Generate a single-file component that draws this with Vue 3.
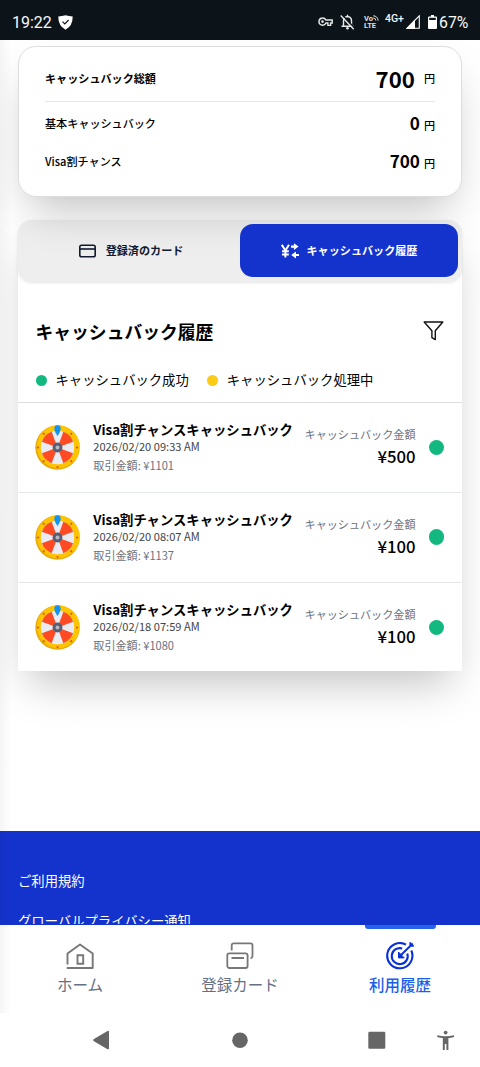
<script setup>
const rows = [
  { date: '2026/02/20 09:33 AM', spent: '¥1101', amount: '¥500' },
  { date: '2026/02/20 08:07 AM', spent: '¥1137', amount: '¥100' },
  { date: '2026/02/18 07:59 AM', spent: '¥1080', amount: '¥100' },
]
const wedges = [45, 135, 225, 315]
const studs = [45, 90, 135, 180, 225, 270, 315]
</script>

<template>
  <div class="screen">
    <header class="status">
      <span class="clock">19:22</span>
      <svg class="shield" width="15" height="15" viewBox="0 0 15 15"><path d="M7.5.2Q11 .8 14.7 1.6Q14.8 11 7.5 14.8Q.2 11 .3 1.6Q4 .8 7.5.2Z" fill="#fff" /><path d="M4.5 6.7l2.3 2.2 3.8-3.9" fill="none" stroke="#0c141a" stroke-width="1.1" /></svg>
      <svg class="key" width="15" height="10" viewBox="0 0 15 10"><path d="M4.5 1a3.6 3.6 0 1 0 3.4 5h2v2.4h2.7V6h1.6V3H7.9A3.6 3.6 0 0 0 4.5 1Z" fill="none" stroke="#e8eaeb" stroke-width="1.4" /><circle cx="4.5" cy="4.6" r="1.3" fill="#e8eaeb" /></svg>
      <svg class="bell" width="15" height="16" viewBox="0 0 15 16"><path d="M3.5 12V6.5Q3.7 3 7.5 2.5Q11.3 3 11.5 6.5V12M1.5 12.3h12M7.5 2.6V.8" fill="none" stroke="#e8eaeb" stroke-width="1.4" /><circle cx="7.5" cy="14.3" r="1.3" fill="#e8eaeb" /><path d="M2 .8l13 13.8" stroke="#0c141a" stroke-width="1.4" /><path d="M.7 1.4l13 13.8" stroke="#e8eaeb" stroke-width="1.4" /></svg>
      <span class="volte"><span class="vo">Vo<svg width="6" height="6" viewBox="0 0 6 6"><path d="M.3.8a4.8 4.8 0 0 1 4.8 4.8M.3 3a2.5 2.5 0 0 1 2.5 2.5" fill="none" stroke="#e8eaeb" /></svg></span><span>LTE</span></span>
      <span class="gen">4G+</span>
      <svg class="signal" width="14" height="14" viewBox="0 0 14 14"><path d="M13.3.8V13.3H.9Z" fill="none" stroke="#fff" stroke-width="1.1" /><path d="M9 4.6V14H0Z" fill="#fff" /></svg>
      <svg class="battery" width="9" height="14" viewBox="0 0 9 14"><path d="M3 0h3v1.5h2q1 0 1 1V13q0 1-1 1H1q-1 0-1-1V2.5q0-1 1-1h2Z" fill="#fff" /><path d="M1.2 2.8h6.600V5H1.2Z" fill="#0c141a" /></svg>
      <span class="percent">67%</span>
    </header>

    <main class="page">
      <section class="summary">
        <div class="sum total"><span>キャッシュバック総額</span><span class="value"><b>700</b><i>円</i></span></div>
        <div class="sum"><span class="label">基本キャッシュバック</span><span class="value"><b>0</b><i>円</i></span></div>
        <div class="sum"><span class="label">Visa割チャンス</span><span class="value"><b>700</b><i>円</i></span></div>
      </section>

      <section class="panel">
        <div class="tabs">
          <div class="tab">
            <svg width="17" height="14" viewBox="0 0 17 14"><rect x=".8" y="1.3" width="15.4" height="11.4" rx="1.8" fill="none" stroke="#111a30" stroke-width="1.6" /><path d="M1 5h15" stroke="#111a30" stroke-width="1.6" /></svg>
            <span>登録済のカード</span>
          </div>
          <div class="tab active">
            <svg width="18" height="16" viewBox="0 0 18 16" fill="none" stroke="#fff" stroke-width="2.2"><path d="M.8 1.8L4.4 7.5 8 1.8M4.4 7v7.500M1 8.2h6.800M1 11.4h6.800" stroke-width="2" /><path d="M10 3.6h4M18 12h-4" /><path d="M12.900 .2l4.700 3.4-4.700 3.4ZM15 8.500L10.200 12l4.800 3.500Z" fill="#fff" stroke="none" /></svg>
            <span>キャッシュバック履歴</span>
          </div>
        </div>

        <div class="heading">
          <h1>キャッシュバック履歴</h1>
          <svg width="21" height="20" viewBox="0 0 21 20"><path d="M1.2 1h18.6L12.300 9.8V18.6L8.9 16.7V9.8Z" fill="none" stroke="#111" stroke-width="1.4" stroke-linejoin="round" /></svg>
        </div>
        <div class="legend">
          <span class="dot"></span><span class="key-text">キャッシュバック成功</span>
          <span class="dot pending"></span><span class="key-text">キャッシュバック処理中</span>
        </div>

        <article v-for="row in rows" :key="row.date" class="row">
          <svg class="wheel" width="45" height="45" viewBox="-22.5 -22.5 45 45">
            <circle r="22.2" fill="#e6aa0b" />
            <ellipse cx=".8" cy="-.8" rx="21.4" ry="21.400" fill="#ffc400" />
            <circle r="16.7" fill="#e8ebf2" />
            <path v-for="a in wedges" :key="a" d="M0 0L-6.900 -15.200A16.700 16.700 0 0 1 6.900 -15.200Z" fill="#ff4b24" :transform="`rotate(${a})`" />
            <circle v-for="a in studs" :key="a" cy="-19.5" r="1.1" fill="#f4472b" :transform="`rotate(${a})`" />
            <circle r="4.9" fill="#5b5e70" /><circle r="2" fill="#b4b7c3" />
            <path d="M0 -11.500Q-3.200 -16 -3.200 -19Q-3 -22.200 0 -22.300Q3 -22.200 3.200 -19Q3.200 -16 0 -11.500Z" fill="#1194f6" />
          </svg>
          <div class="info">
            <strong>Visa割チャンスキャッシュバック</strong>
            <span class="date">{{ row.date }}</span>
            <span class="spent">取引金額: {{ row.spent }}</span>
          </div>
          <div class="amount"><span>キャッシュバック金額</span><b>{{ row.amount }}</b></div>
          <span class="state"></span>
        </article>
      </section>

      <footer class="footer"><span>ご利用規約</span><span>グローバルプライバシー通知</span></footer>
    </main>

    <nav class="nav">
      <div class="item">
        <svg width="28" height="28" viewBox="0 0 28 28" fill="none" stroke="#777" stroke-width="1.9"><path d="M1.5 22.5V11.5L14 2.5l12.7 9V26H.8" stroke-linejoin="round" /><path d="M11.500 13.300h5.700v8.500h-5.700Z" /></svg>
        <span>ホーム</span>
      </div>
      <div class="item">
        <svg width="28" height="28" viewBox="0 0 28 28" fill="none" stroke="#777" stroke-width="1.8"><rect x="1.3" y="11.300" width="20.300" height="14.700" rx="2" /><path d="M5.700 8.500V3.300q0-2 2-2H24.500q2 0 2 2V14q0 2-2 2.500M5.500 16H18" /></svg>
        <span>登録カード</span>
      </div>
      <div class="item current">
        <svg width="28" height="28" viewBox="0 0 28 28" fill="none" stroke="#0a31d5" stroke-width="2.1"><path d="M20 2.700A12.600 12.600 0 1 0 25.300 8.500" /><path d="M16.200 6.500A8 8 0 1 0 21.300 11.500" /><path d="M26.800 1.500L14.500 13.500M24.300.3v3.600h3.500" stroke-width="1.9" /><path d="M12.500 10V15.900H18.200Z" fill="#0a31d5" stroke-width="1" /></svg>
        <span>利用履歴</span>
      </div>
    </nav>

    <div class="system">
      <svg width="480" height="54" viewBox="0 0 480 54" fill="#666"><path d="M93.5 26.2Q93 27.3 93.5 28L107.5 36.2Q109 36.6 109 35.5V18.8Q109 17.5 107.5 18Z" /><circle cx="240" cy="27.2" r="7.8" /><rect x="368.3" y="18.7" width="17" height="17" rx="1.2" /><circle cx="445.6" cy="19.6" r="1.9" /><path d="M437.3 22.3Q445.6 24.3 454 22.3V24.1Q451 24.9 448.4 25V37H446.4V31H444.8V37H442.8V25Q440 24.9 437.3 24.1Z" /></svg>
    </div>
    <div class="edge"></div>
  </div>
</template>

<style scoped>
.screen { position: relative; width: 480px; height: 1067px; overflow: hidden; display: flex; flex-direction: column; background: #fff; color: #000; font-family: "Noto Sans CJK JP", sans-serif; font-size: 11.1px; }
svg { display: block; flex: none; }
.status { height: 40px; flex: none; box-sizing: border-box; padding: 4px 12px 0 12px; display: flex; align-items: center; background: #0c141a; color: #f7f8f8; font-family: Roboto, sans-serif; font-size: 16px; position: relative; z-index: 3; }
.clock { width: 39px; white-space: nowrap; }
.shield { margin-left: 7px; }
.key { margin-left: auto; }
.bell { margin-left: 7px; }
.volte { width: 17px; margin-left: 9px; display: flex; flex-direction: column; font-size: 7.5px; line-height: 7.5px; font-weight: 700; color: #dfe2e4; }
.vo { display: flex; }
.gen { margin: -7px 2px 0 4px; font-size: 10.5px; font-weight: 500; width: 19px; white-space: nowrap; }
.battery { margin: 0 2px 0 8px; }
.percent { width: 29px; white-space: nowrap; font-size: 15.8px; }
.page { height: 884px; flex: none; box-sizing: border-box; overflow: hidden; padding-top: 6px; display: flex; flex-direction: column; }
.summary { position: relative; z-index: 2; flex: none; box-sizing: border-box; height: 151px; margin: 0 18px; padding: 8px 26px 0; border: 1px solid #ddd; border-radius: 18px; background: #fff; box-shadow: 0 22px 44px -11px rgba(0, 0, 0, .25); }
.sum { display: flex; justify-content: space-between; align-items: center; height: 38px; font-weight: 500; line-height: 16px; }
.label { margin-top: -2px; }
.total { height: 47px; box-sizing: border-box; border-bottom: 1px solid #e5e7eb; margin-bottom: 3px; font-weight: 700; }
.value { display: flex; align-items: baseline; gap: 4px; line-height: 28px; }
.value b { font-size: 17.1px; font-weight: 700; }
.value i { font-style: normal; font-weight: 500; }
.total .value b { font-size: 22.2px; }
.total .value { gap: 9px; align-items: center; }
.panel { flex: none; height: 451px; margin: 23px 18px 0; border-radius: 14px 14px 0 0; background: #fff; box-shadow: 0 22px 44px -11px rgba(0, 0, 0, .25); }
.tabs { height: 62px; box-sizing: border-box; display: flex; padding: 4px; border-radius: 14px; background: #eee; box-shadow: 0 1px 3px rgba(0, 0, 0, .1); }
.tab { flex: 1; display: flex; height: 53px; align-items: center; justify-content: center; gap: 10px; border-radius: 13px; color: #111a30; font-weight: 700; }
.tab span { margin-top: -1px; }
.tab.active { position: relative; z-index: 3; gap: 8px; background: #1433cd; color: #fff; }
.heading { height: 98px; box-sizing: border-box; display: flex; align-items: center; justify-content: space-between; padding: 0 18px 0 17.5px; }
.heading h1 { margin: -1px 0 0; font-size: 17.8px; line-height: 26px; font-weight: 700; }
.legend { height: 22px; padding: 0 17.5px 11px; border-bottom: 1px solid #ddd; margin-top: -11px; display: flex; align-items: center; font-size: 13.33px; }
.key-text { margin-top: -1px; }
.dot { width: 11px; height: 11px; border-radius: 50%; background: #13b880; margin-right: 9px; }
.pending { margin-left: 18px; background: #fbcb16; }
.row { height: 89.8px; box-sizing: border-box; padding: 0 18px 0 17.3px; border-bottom: 1px solid #e5e7eb; display: flex; align-items: center; }
.row:last-child { border-bottom: 0; }
.info { margin-left: 13px; display: flex; flex-direction: column; white-space: nowrap; }
.info strong { position: relative; top: 1px; font-size: 13.33px; line-height: 18px; font-weight: 700; }
.date { line-height: 16px; color: #444; }
.spent { margin-top: 2px; line-height: 18px; color: #6b7280; }
.amount { margin-left: auto; display: flex; flex-direction: column; align-items: flex-end; white-space: nowrap; line-height: 18px; color: #6b7280; }
.amount b { line-height: 27px; font-size: 16.7px; font-weight: 500; color: #000; }
.state { width: 15.5px; height: 15.5px; flex: none; border-radius: 50%; background: #13b880; margin-left: 13px; }
.footer { position: relative; z-index: 1; margin-top: 160px; height: 94px; flex: none; box-sizing: border-box; padding: 40px 18px 0; display: flex; flex-direction: column; gap: 20px; background: #1433cd; color: #fff; font-size: 13.33px; line-height: 20px; }
.nav { height: 89px; flex: none; display: flex; background: linear-gradient(#1433cd 0 .6px, #fff .6px); position: relative; z-index: 2; }
.item { width: 160px; box-sizing: border-box; padding-top: 18px; display: flex; flex-direction: column; align-items: center; font-size: 15.5px; line-height: 24px; color: #667085; position: relative; }
.item span { margin-top: 2px; }
.current { color: #1b5eea; font-weight: 500; }
.current::before { content: ""; position: absolute; top: 1px; left: 44.5px; width: 71px; height: 4px; background: #2563eb; border-radius: 0 0 3px 3px; }
.system { flex: none; height: 54px; background: #fff; }
.edge { position: absolute; z-index: 2; left: 0; top: 40px; width: 12px; height: 973px; pointer-events: none; background: linear-gradient(90deg, rgba(0, 0, 0, .04), transparent); }
</style>

<style>
html, body { margin: 0; background: #fff; }
</style>
